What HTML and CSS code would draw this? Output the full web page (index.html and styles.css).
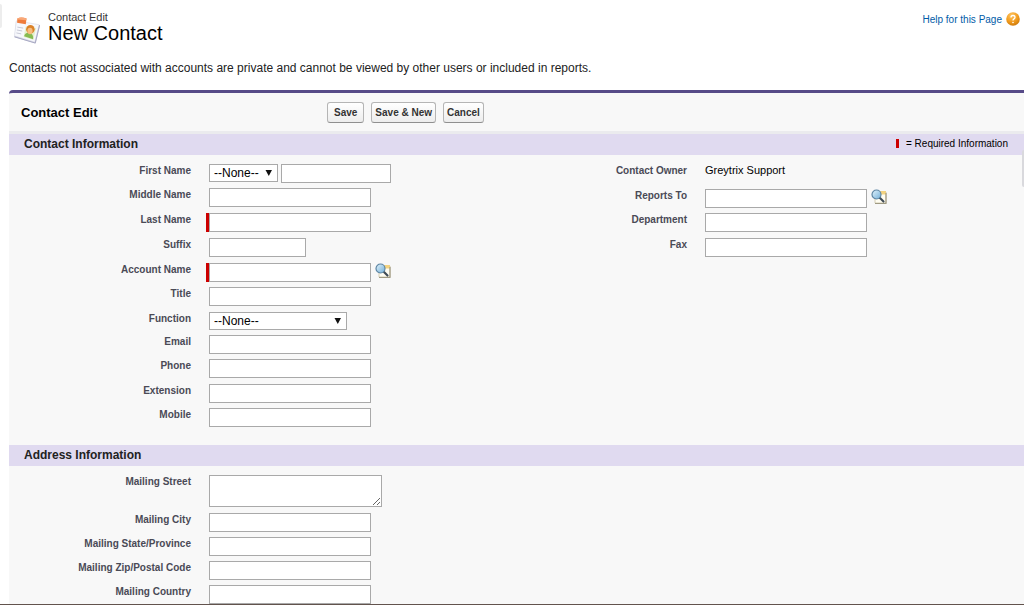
FILE: index.html
```html
<!DOCTYPE html>
<html lang="en">
<head>
<meta charset="utf-8">
<title>Contact Edit: New Contact</title>
<link rel="stylesheet" href="styles.css">
</head>
<body>
<svg class="defs" aria-hidden="true">
  <defs>
    <linearGradient id="lens" x1="0" y1="0" x2="1" y2="1"><stop offset="0" stop-color="#e2f3fc"/><stop offset="1" stop-color="#72afd8"/></linearGradient>
    <radialGradient id="orange" cx=".4" cy=".25" r=".8"><stop offset="0" stop-color="#ffc562"/><stop offset=".6" stop-color="#f09a1c"/><stop offset="1" stop-color="#c97508"/></radialGradient>
    <symbol id="lookup" viewBox="0 0 16 16">
      <path d="M4 3h11v11H4z" fill="#fffdf2" stroke="#c9c2a6" stroke-width=".8"/>
      <path d="M8 2h7v3.500H9z" fill="#f3d380"/>
      <path d="M15 4v10.500H4" fill="none" stroke="#9f9a83" stroke-width="1.200"/>
      <path d="M8.500 8.500l4 4" stroke="#3f4b55" stroke-width="2.200" stroke-linecap="round"/>
      <circle cx="5.500" cy="5.500" r="4.500" fill="url(#lens)" stroke="#5d85a3" stroke-width="1.200"/>
    </symbol>
    <symbol id="caret" viewBox="0 0 8 8"><path d="M.5 1h6.500L3.800 7z" fill="#111"/></symbol>
  </defs>
</svg>
<div class="edge edge--left"></div>
<div class="edge edge--right"></div>
<header class="page-header">
  <svg class="contact-icon" viewBox="0 0 30 30" aria-hidden="true">
    <path d="M3 6l25 3.500-4.500 19L1.500 22z" fill="#d4d5e2"/>
    <path d="M3.500 5l23.500 4-4.500 18L1.500 20.500z" fill="#f7f8fc" stroke="#dcdde8" stroke-width=".7"/>
    <path d="M23 28L1.500 21.500M27.500 9.500l-4.500 18.500" fill="none" stroke="#a6a7c2" stroke-width="1"/>
    <path d="M4.500 2.500q4-2 9.500.2l-.8 5.800-9-1.500z" fill="#ef7c3c"/>
    <path d="M4.500 2.500q4-2 9.500.2l-.3 1.600-9.300-.6z" fill="#f9a878"/>
    <path d="M13 11l11 1.500-3 12-10-2.700z" fill="#e4f0cb"/>
    <path d="M11.500 21q.8-4 5-3.600 5 1 4.300 6.600z" fill="#86bb52"/>
    <circle cx="18" cy="13.800" r="4.400" fill="#db8227"/>
    <ellipse cx="17.600" cy="15.500" rx="2.700" ry="3.300" fill="#f7bd80"/>
    <path d="M4.500 11.500l6 1M4 14.500l5.500 1M3.500 17.500l5 1" stroke="#c6c8d6" stroke-width="1"/>
  </svg>
  <div class="page-title">
    <p class="page-type">Contact Edit</p>
    <h1>New Contact</h1>
  </div>
  <a class="help" href="#">Help for this Page
    <svg viewBox="0 0 14 14" aria-hidden="true"><circle cx="7" cy="7" r="6.800" fill="url(#orange)"/><path d="M5 5.500q0-2 2-2t2 1.800q0 1-1 1.600T7 8.500" fill="none" stroke="#fff" stroke-width="1.300"/><circle cx="7" cy="10.500" r=".8" fill="#fff"/></svg>
  </a>
</header>
<p class="notice">Contacts not associated with accounts are private and cannot be viewed by other users or included in reports.</p>
<form class="panel">
  <div class="toolbar">
    <h2>Contact Edit</h2>
    <div class="actions">
      <button type="button" class="save">Save</button>
      <button type="button">Save &amp; New</button>
      <button type="button">Cancel</button>
    </div>
  </div>
  <section>
    <div class="section-head">
      <h3>Contact Information</h3>
      <span class="legend"><span class="legend-mark"></span>= Required Information</span>
    </div>
    <div class="columns columns--contact">
      <div class="column">
        <div class="row"><label for="first">First Name</label><div class="field">
          <span class="select select--short"><select aria-label="Salutation"><option>--None--</option></select><svg><use href="#caret"/></svg></span>
          <input id="first" class="first" type="text"></div></div>
        <div class="row row--tall"><label for="middle">Middle Name</label><div class="field"><input id="middle" type="text"></div></div>
        <div class="row row--tall"><label for="last">Last Name</label><div class="field required"><input id="last" type="text" required></div></div>
        <div class="row row--tall"><label for="suffix">Suffix</label><div class="field"><input id="suffix" class="suffix" type="text"></div></div>
        <div class="row"><label for="account">Account Name</label><div class="field required"><input id="account" type="text" required><button type="button" class="lookup" aria-label="Account Name Lookup"><svg><use href="#lookup"/></svg></button></div></div>
        <div class="row row--tall"><label for="title">Title</label><div class="field"><input id="title" type="text"></div></div>
        <div class="row row--short"><label for="function">Function</label><div class="field"><span class="select select--long"><select id="function"><option>--None--</option></select><svg><use href="#caret"/></svg></span></div></div>
        <div class="row"><label for="email">Email</label><div class="field"><input id="email" type="text"></div></div>
        <div class="row row--tall"><label for="phone">Phone</label><div class="field"><input id="phone" type="text"></div></div>
        <div class="row"><label for="extension">Extension</label><div class="field"><input id="extension" type="text"></div></div>
        <div class="row"><label for="mobile">Mobile</label><div class="field"><input id="mobile" type="text"></div></div>
      </div>
      <div class="column">
        <div class="row row--tall"><span class="label">Contact Owner</span><span class="value">Greytrix Support</span></div>
        <div class="row"><label for="reports">Reports To</label><div class="field"><input id="reports" type="text"><button type="button" class="lookup" aria-label="Reports To Lookup"><svg><use href="#lookup"/></svg></button></div></div>
        <div class="row row--tall"><label for="department">Department</label><div class="field"><input id="department" type="text"></div></div>
        <div class="row"><label for="fax">Fax</label><div class="field"><input id="fax" type="text"></div></div>
      </div>
    </div>
  </section>
  <section>
    <div class="section-head"><h3>Address Information</h3></div>
    <div class="columns columns--address">
      <div class="column">
        <div class="row row--area"><label for="street">Mailing Street</label><div class="field"><textarea id="street"></textarea></div></div>
        <div class="row"><label for="city">Mailing City</label><div class="field"><input id="city" type="text"></div></div>
        <div class="row"><label for="state">Mailing State/Province</label><div class="field"><input id="state" type="text"></div></div>
        <div class="row"><label for="zip">Mailing Zip/Postal Code</label><div class="field"><input id="zip" type="text"></div></div>
        <div class="row row--last"><label for="country">Mailing Country</label><div class="field"><input id="country" type="text"></div></div>
      </div>
    </div>
  </section>
</form>
<div class="page-end"></div>
</body>
</html>
```
FILE: styles.css
```css
* { box-sizing: border-box; }
body {
  margin: 0;
  position: relative;
  background: #fff;
  color: #222;
  font-family: "Liberation Sans", Arial, sans-serif;
  font-size: 12px;
}
h1, h2, h3, p { margin: 0; }
.defs { position: absolute; width: 0; height: 0; }
.edge { position: absolute; background: #ededed; }
.edge--left { left: 0; top: 4px; width: 2px; height: 24px; border-radius: 0 2px 2px 0; }
.edge--right { right: 0; top: 150px; width: 2px; height: 37px; background: #d9d9dd; border-radius: 2px 0 0 2px; }

.page-header { display: flex; align-items: flex-start; padding: 11px 4px 0 13px; }
.contact-icon { width: 29px; height: 29px; margin: 5px 6px 0 0; }
.page-title { flex: 1; }
.page-type { font-size: 11px; line-height: 12px; color: #333; }
h1 { font-size: 20px; line-height: 20px; font-weight: normal; color: #000; }
.help { display: flex; align-items: center; gap: 4px; font-size: 10px; line-height: 18px; color: #015ba7; text-decoration: none; }
.help svg { width: 14px; height: 14px; margin-bottom: 2px; }
.notice { padding: 16px 9px 14px; line-height: 15px; }

.panel { margin-left: 9px; background: #f8f8f8; border-top: 3px solid #574b88; border-radius: 4px 0 0 0; }
.toolbar { display: flex; align-items: center; height: 41px; padding-left: 12px; border-bottom: 3px solid #ebebee; }
.toolbar h2 { width: 306px; font-size: 13px; color: #000; }
.actions { display: flex; gap: 7px; }
.actions button {
  height: 21px;
  padding: 0 3px;
  border: 1px solid #b5b5b5;
  border-bottom-color: #8f8f8f;
  border-radius: 3px;
  background: linear-gradient(#fff, #ededed);
  color: #333;
  font: bold 10px "Liberation Sans", Arial, sans-serif;
}
.actions .save { padding: 0 6px; }

.section-head { display: flex; justify-content: space-between; align-items: center; height: 21px; padding: 0 16px 2px 15px; background: #e0daf0; }
.section-head h3 { font-size: 12px; color: #222; }
.legend { display: flex; align-items: center; gap: 7px; font-size: 10px; color: #000; }
.legend-mark { width: 3px; height: 9px; background: #c00; }

.columns { display: grid; grid-template-columns: 496fr 519fr; }
.columns--contact { padding: 9px 0 13px; }
.columns--address { padding-top: 9px; }
.row { display: flex; gap: 18px; height: 24px; }
.row--tall { height: 25px; }
.row--short { height: 23px; }
.row--area { height: 38px; }
.row--last { height: 19px; }
label, .label { width: 182px; line-height: 13px; font-size: 10px; font-weight: bold; color: #4a4a56; text-align: right; }
.value { line-height: 13px; font-size: 11px; color: #000; }
.field { display: flex; align-items: flex-start; gap: 3px; }
.required { margin-left: -3px; gap: 0; }
.required::before { content: ""; width: 3px; height: 19px; background: #c00; }
input { width: 162px; height: 19px; padding: 1px 3px; border: 1px solid #a9a9a9; background: #fff; font: inherit; }
.first { width: 110px; }
.suffix { width: 97px; }
textarea { display: block; width: 173px; height: 32px; padding: 2px; border: 1px solid #a9a9a9; background: #fff; font: inherit; }
.select { display: grid; height: 18px; }
.select--short { width: 69px; }
.select--long { width: 138px; }
.select select, .select svg { grid-area: 1 / 1; }
.select select { appearance: none; width: 100%; height: 18px; padding: 0 4px; border: 1px solid #a9a9a9; border-radius: 0; background: #fff; color: #000; font: 12px/16px "Liberation Sans", Arial, sans-serif; }
.select svg { place-self: center end; width: 8px; height: 8px; margin-right: 5px; pointer-events: none; }
.lookup { height: 16px; margin-left: 1px; padding: 0; border: 0; background: none; }
.required .lookup { margin-left: 4px; }
.lookup svg { display: block; width: 16px; height: 16px; }
.page-end { height: 1px; background: #62534d; }
```
